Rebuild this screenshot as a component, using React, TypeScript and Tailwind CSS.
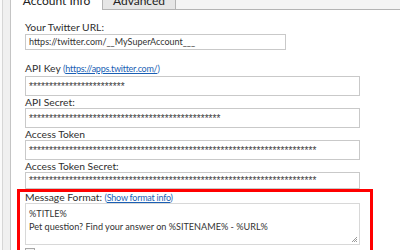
import React from "react";

const font = { fontFamily: 'Lato, "Open Sans", sans-serif' };

function Label({ children, className = "leading-[12px]" }: any) {
  return (
    <div className={"text-[10.3px] text-[#2e2e2e] whitespace-nowrap " + className}>
      {children}
    </div>
  );
}

function Link({ children }: any) {
  return (
    <span className="text-[9px] tracking-[-0.25px] text-[#1a5fb4]">
      (<span className="underline">{children}</span>)
    </span>
  );
}

function Stars({ n }: { n: number }) {
  return (
    <span className="font-['Liberation_Sans',Arial,sans-serif] text-[10px] tracking-[0.1px] text-[#3a3a3a]">
      {"*".repeat(n)}
    </span>
  );
}

function Field({ children, w = "w-[335px]", h = "h-[20px]" }: any) {
  return (
    <div className={`${w} ${h} border border-[#c9c9c9] bg-white flex items-center pl-[3px] overflow-hidden whitespace-nowrap text-[9px] text-[#333]`}>
      {children}
    </div>
  );
}

export default function App() {
  return (
    <div className="w-[400px] h-[250px] overflow-hidden bg-white flex" style={font}>
      {/* window edge */}
      <div className="w-[2px] bg-[#fafafa]" />
      <div className="w-px bg-[#d6d6d6]" />
      <div className="w-[7px] bg-[#f0f0f0]" />
      <div className="w-px bg-[#c4c4c4]" />

      <div className="flex-1 flex flex-col">
        {/* tabs */}
        <div className="h-[10px] flex shrink-0">
          <div className="w-[92px] bg-white border-r border-[#b4b4b4] overflow-hidden flex justify-center">
            <span className="text-[12px] leading-[12px] -mt-[5px] text-[#222]">Account Info</span>
          </div>
          <div className="w-[73px] bg-[#e6e6e6] border-r border-b border-[#b4b4b4] overflow-hidden flex justify-center">
            <span className="text-[12px] leading-[12px] -mt-[5px] text-[#222]">Advanced</span>
          </div>
          <div className="flex-1 bg-[#f4f4f4] border-b border-[#b4b4b4]" />
        </div>

        {/* form */}
        <div className="pl-[14px] flex flex-col">
          <Label className="mt-[10px] leading-[14px]">Your Twitter URL:</Label>
          <Field w="w-[261px]" h="h-[16px]">https://twitter.com/__MySuperAccount___</Field>

          <Label className="mt-[11px] leading-[14px]">
            API Key <Link>https://apps.twitter.com/</Link>
          </Label>
          <Field>
            <Stars n={24} />
          </Field>

          <Label>API Secret:</Label>
          <Field>
            <Stars n={48} />
          </Field>

          <Label>Access Token</Label>
          <Field>
            <Stars n={72} />
          </Field>

          <Label>Access Token Secret:</Label>
          <Field h="h-[17px]">
            <Stars n={72} />
          </Field>

          {/* highlighted section */}
          <div className="-ml-[8px] w-[356px] border-[3px] border-[#ff0000] pl-[5px] pb-[6px]">
            <Label className="leading-[11px]">
              Message Format: <Link>Show format info</Link>
            </Label>
            <div className="relative w-[335px] h-[42px] border border-[#d8d8d8] bg-white pl-[3px] pt-[3px] text-[9.1px] leading-[13px] text-[#333] whitespace-nowrap">
              <div>%TITLE%</div>
              <div>Pet question? Find your answer on %SITENAME% - %URL%</div>
              <svg className="absolute right-[1px] bottom-[1px]" width="7" height="7" viewBox="0 0 7 7">
                <path d="M6 1 L1 6 M6 3 L3 6 M6 5 L5 6" stroke="#9a9a9a" strokeWidth="1" />
              </svg>
            </div>
            <div className="mt-[3px] w-[10px] h-[10px] border border-[#a8a8a8] bg-[#f4f4f4]" />
          </div>
        </div>
      </div>
    </div>
  );
}
